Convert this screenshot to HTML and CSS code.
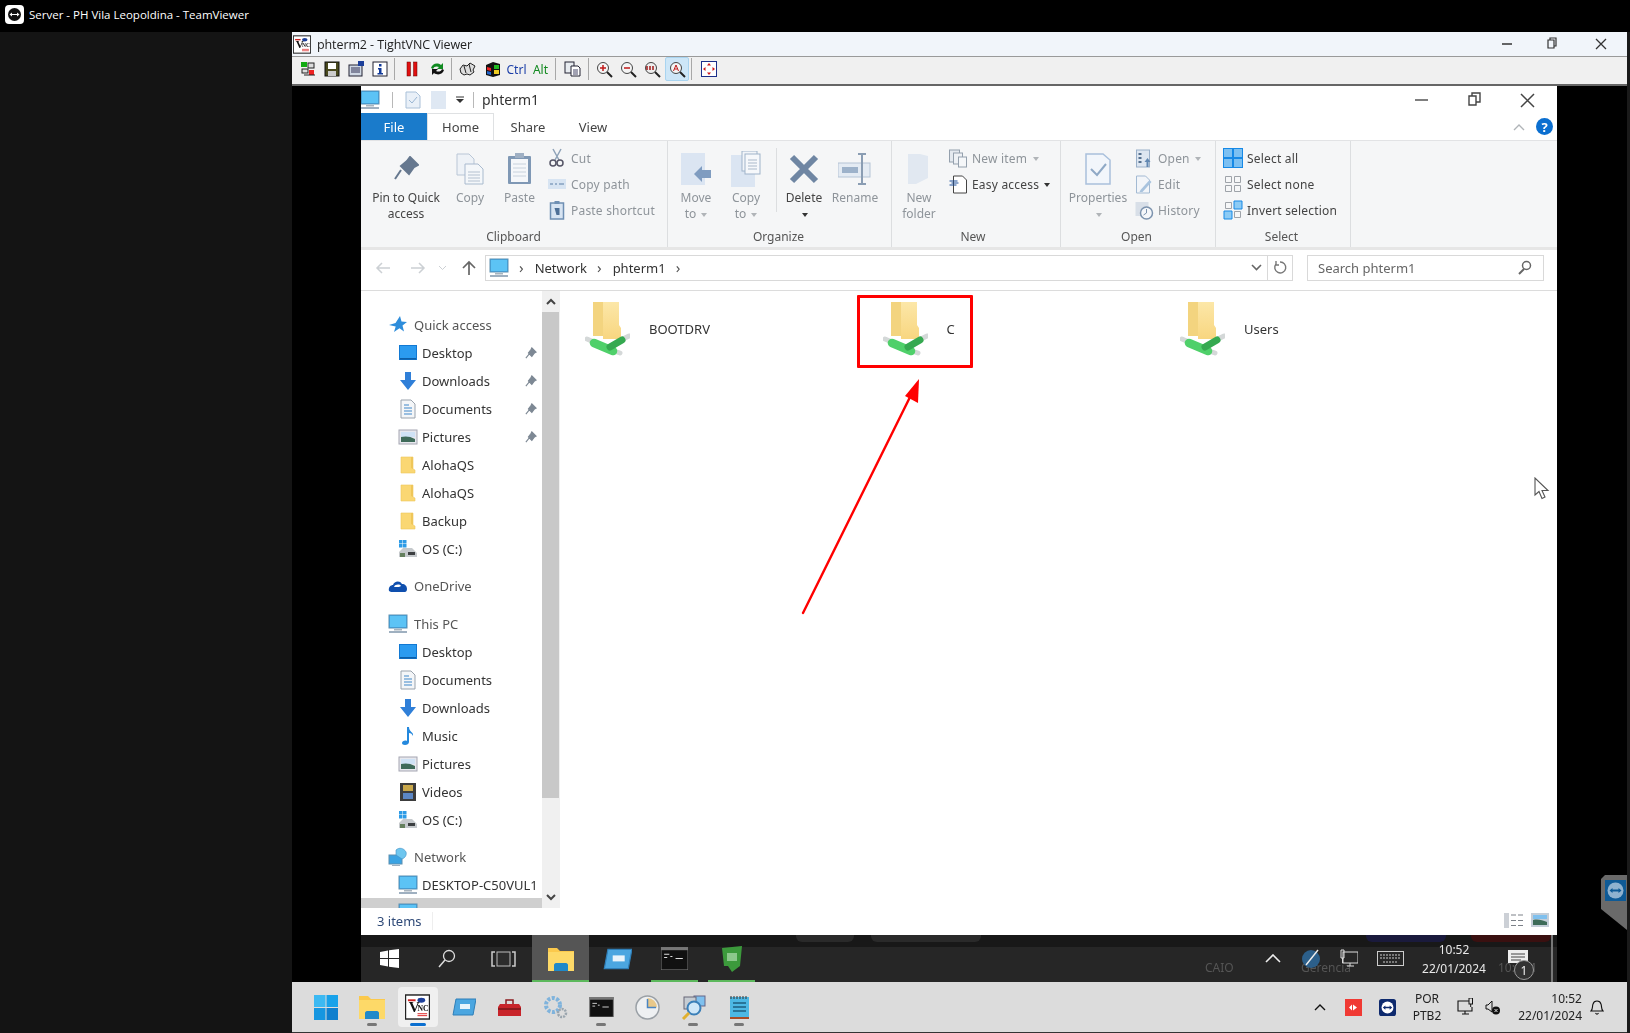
FILE: index.html
```html
<!DOCTYPE html>
<html lang="en">
<head>
<meta charset="utf-8">
<title>Server - PH Vila Leopoldina - TeamViewer</title>
<link rel="stylesheet" href="styles.css">
</head>
<body>
<svg class="defs" width="0" height="0">
  <defs>
    <linearGradient id="fgrad" x1="0" y1="0" x2="0" y2="1"><stop offset="0" stop-color="#fce7a8"/><stop offset="1" stop-color="#f8d680"/></linearGradient>
    <symbol id="mon" viewBox="0 0 20 20"><rect x="1" y="1" width="18" height="13" fill="#35a8ee" stroke="#5d8fb0"/><rect x="2" y="2" width="16" height="11" fill="#5cc3f5"/><rect x="6" y="15" width="8" height="1.5" fill="#a8b4be"/><rect x="1" y="17" width="18" height="2" fill="#9fb0c0"/></symbol>
    <symbol id="desk" viewBox="0 0 20 20"><rect x="1" y="2" width="18" height="15" fill="#1279d3"/><rect x="2" y="3" width="16" height="12" fill="#2b9bf0"/><rect x="2" y="15" width="16" height="1.5" fill="#0d5fa8"/></symbol>
    <symbol id="down" viewBox="0 0 20 20"><path d="M7 1h6v8h5l-8 10L2 9h5z" fill="#2f7fd8"/></symbol>
    <symbol id="doc" viewBox="0 0 20 20"><path d="M3 1h10l4 4v14H3z" fill="#f4f6f8" stroke="#9aa3ad"/><path d="M6 6h5M6 9h8M6 12h8M6 15h8" stroke="#3f87c9"/></symbol>
    <symbol id="pic" viewBox="0 0 20 20"><rect x="1" y="3" width="18" height="14" fill="#e7e8ee" stroke="#a5a6b2"/><rect x="3" y="5" width="14" height="5" fill="#cfe2f5"/><path d="M3 10c4-1 9-1 14 2v3H3z" fill="#3f6b5a"/></symbol>
    <symbol id="fold" viewBox="0 0 20 20"><path d="M3 2h12v12l2 1v3H3z" fill="#fad773" stroke="#eec65c" stroke-width=".6"/><path d="M13 2h2v12l-2-1z" fill="#efc659"/></symbol>
    <symbol id="drive" viewBox="0 0 20 20"><rect x="1" y="1" width="3.5" height="3.5" fill="#2d9be6"/><rect x="5" y="1" width="3.5" height="3.5" fill="#2d9be6"/><rect x="1" y="5" width="3.5" height="3.5" fill="#2d9be6"/><rect x="5" y="5" width="3.5" height="3.5" fill="#2d9be6"/><path d="M1 13l4-4h9l5 5v4H1z" fill="#c5c9cc"/><rect x="10" y="13" width="7" height="3" fill="#3c3f41"/><rect x="2" y="14" width="5" height="4" fill="#65805e"/></symbol>
    <symbol id="pin" viewBox="0 0 14 14"><path d="M8 1l5 5-2 1-3 4-1-1-2-2-1-1 3-4zM5 8l-4 5" fill="#7d8894" stroke="#7d8894" stroke-width="1.3"/></symbol>
    <symbol id="star" viewBox="0 0 20 20"><path d="M12 1l1.5 5.5L19 7l-4.500 3.500 1.500 6-4.500-3.300L6 17l1.700-5.600L1 10l6.500-2z" fill="#2e8ddb"/></symbol>
    <symbol id="cloud" viewBox="0 0 20 20"><path d="M1 15c-1-4 2-6 4-6 1-4 7-5 9-1 3 0 5 2 5 5 0 2-1 3-2 3H3z" fill="#0f4fae"/><path d="M6 11c1-3 6-3 7-1l-2 1c-2 0-3 0-5 0z" fill="#fff"/></symbol>
    <symbol id="net" viewBox="0 0 20 20"><rect x="1" y="8" width="13" height="9" fill="#3aa3e3" stroke="#5d8fb0"/><rect x="4" y="18" width="8" height="1" fill="#9fb0c0"/><path d="M8 3c3-3 8-2 10 2 1 3-1 6-4 7L8 8z" fill="#6ec6ef" stroke="#3f8fc5" stroke-width=".6"/></symbol>
    <symbol id="music" viewBox="0 0 20 20"><path d="M9 1h2c0 5 5 5 4 9-1-2-2-3-4-3v9c0 2-2 3-4 3s-3-1-3-2c0-2 3-3 5-2z" fill="#2488dd"/></symbol>
    <symbol id="vid" viewBox="0 0 20 20"><rect x="2" y="1" width="16" height="18" fill="#3c3c3c"/><rect x="5" y="3" width="10" height="6" fill="#c9a84b"/><rect x="5" y="11" width="10" height="6" fill="#5b86c4"/></symbol>
    <symbol id="nf" viewBox="0 0 45 55"><path d="M8 1h16v34H8z" fill="#f3d47f"/><path d="M18 1h16v23l2 3v11H18z" fill="url(#fgrad)"/><path d="M2 38l7 3M29 50l6 2M38 38l6-3" stroke="#d4d8d8" stroke-width="5" stroke-linecap="round"/><path d="M9 42l19 8" stroke="#4fd06a" stroke-width="8.500" stroke-linecap="round"/><path d="M25 46l12-7" stroke="#35a950" stroke-width="7" stroke-linecap="round"/></symbol>
    <symbol id="vnc" viewBox="0 0 26 26"><rect x=".5" y=".5" width="25" height="25" fill="#fff" stroke="#222" stroke-width="1.500"/><ellipse cx="17" cy="6" rx="4" ry="2.500" fill="#1c3f9a"/><path d="M3 6h8" stroke="#c22" stroke-width="2"/><text x="4" y="18" class="vnct">V</text><text x="13" y="17" class="vncs">NC</text><path d="M13 20h10" stroke="#d22"/><path d="M13 22h10" stroke="#d22"/></symbol>
    <symbol id="tv" viewBox="0 0 20 20"><rect width="20" height="20" rx="3" fill="#0e2a6e"/><circle cx="10" cy="10" r="7" fill="#fff"/><path d="M4.500 10L7.500 7.500V9h5V7.500l3 2.500-3 2.500V11h-5v1.500z" fill="#0e2a6e"/></symbol>
    <symbol id="term" viewBox="0 0 26 22"><rect width="26" height="22" fill="#111" stroke="#777"/><rect y="0" width="26" height="3" fill="#777"/><path d="M3 7h5M3 10h3M9 9h2M14 11h7" stroke="#ddd"/></symbol>
    <symbol id="efold" viewBox="0 0 26 24"><path d="M0 1h9l3 3h14v20H0z" fill="#fbc94c"/><rect y="5" width="26" height="19" fill="#fdd968"/><path d="M6 24v-6c0-1 1-2 2-2h10c1 0 2 1 2 2v6z" fill="#1f89c9"/></symbol>
    <symbol id="blue" viewBox="0 0 24 20"><path d="M4 2h20l-3 16H1z" fill="#4ba6e0" stroke="#2f7fb8"/><rect x="8" y="7" width="10" height="5" fill="#e9f4fb"/></symbol>
  </defs>
</svg>

<div class="screen">
  <header class="topbar">
    <svg class="tvlogo" width="19" height="19" viewBox="0 0 19 19"><rect width="19" height="19" rx="4" fill="#fff"/><circle cx="9.500" cy="9.500" r="6.500" fill="#111"/><path d="M4.500 9.500L7 7.500V9h5V7.500l2.500 2-2.500 2V10H7v1.500z" fill="#fff"/></svg>
    <span class="toptitle">Server - PH Vila Leopoldina - TeamViewer</span>
  </header>

  <div class="stage">
    <aside class="leftpad"></aside>
    <main class="vnc">
      <div class="vnctitle">
        <svg class="vncico" width="18" height="19"><use href="#vnc"/></svg>
        <span class="vnctext">phterm2 - TightVNC Viewer</span>
        <div class="wbtns vncbtns">
          <svg width="46" height="14" viewBox="0 0 46 14"><path d="M16 7h10" stroke="#333" stroke-width="1.500"/></svg>
          <svg width="46" height="14" viewBox="0 0 46 14"><path d="M16 3h6v8h-6zM18 3V1h6v8h-2" fill="none" stroke="#333" stroke-width="1.200"/></svg>
          <svg width="46" height="14" viewBox="0 0 46 14"><path d="M18 2l10 10M28 2L18 12" stroke="#333" stroke-width="1.300"/></svg>
        </div>
      </div>

      <div class="toolbar">
        <span class="tb w24"><svg width="16" height="16" viewBox="0 0 16 16"><rect x="1" y="1" width="6" height="5" fill="#1a1"/><rect x="8" y="2" width="6" height="5" fill="#ddd" stroke="#222"/><rect x="2" y="8" width="6" height="4" fill="#ddd" stroke="#222"/><rect x="9" y="9" width="5" height="5" fill="#e22"/><path d="M4 14h11" stroke="#222"/></svg></span>
        <span class="tb w24"><svg width="16" height="16" viewBox="0 0 16 16"><rect x="1" y="1" width="14" height="14" fill="#4a4a1e" stroke="#111"/><rect x="4" y="2" width="8" height="6" fill="#fff"/><rect x="4" y="10" width="8" height="5" fill="#ccc"/></svg></span>
        <span class="tb w24"><svg width="16" height="16" viewBox="0 0 16 16"><rect x="1" y="4" width="13" height="11" fill="#cfd8e4" stroke="#223"/><path d="M3 7h9M3 9h9M3 11h9" stroke="#335"/><rect x="10" y="0" width="6" height="5" fill="#1c3f9a"/></svg></span>
        <span class="tb w24"><svg width="16" height="16" viewBox="0 0 16 16"><rect x="1" y="1" width="14" height="14" fill="#fff" stroke="#223"/><rect x="7" y="3" width="2.500" height="2.500" fill="#123a9a"/><path d="M6 7h3.500v5H11v1.500H5.500V12H7V8.500H6z" fill="#123a9a"/></svg></span>
        <span class="tbsep w7"></span>
        <span class="tb w26"><svg width="12" height="16" viewBox="0 0 12 16"><rect x="1" y="1" width="3.500" height="14" fill="#e01010" stroke="#600" stroke-width=".5"/><rect x="7.500" y="1" width="3.500" height="14" fill="#e01010" stroke="#600" stroke-width=".5"/></svg></span>
        <span class="tb w24"><svg width="17" height="16" viewBox="0 0 17 16"><path d="M2 7c1-4 6-6 10-3l2-2v6H8l2-2C8 5 5 5 4 8z" fill="#108a20"/><path d="M15 9c-1 4-6 6-10 3l-2 2V8h6l-2 2c2 1 5 1 6-2z" fill="#111"/></svg></span>
        <span class="tbsep w6"></span>
        <span class="tb w25"><svg width="17" height="14" viewBox="0 0 17 14"><path d="M1 7l3-4 4 1 3-3 5 3-2 4 1 2-4 3-3-1-3 1-3-2z" fill="#ddd" stroke="#222"/><path d="M5 4l2 7M10 2l2 8" stroke="#222"/></svg></span>
        <span class="tb w25"><svg width="16" height="17" viewBox="0 0 16 17"><path d="M1 4l7-3 7 2v11l-7 2-7-2z" fill="#111"/><path d="M2 6l4 1v3L2 9z" fill="#e22"/><path d="M9 4l5 0v4H9z" fill="#2b2"/><path d="M2 10l4 1v3l-4-1z" fill="#26c"/><path d="M9 9h5v4H9z" fill="#ec2"/></svg></span>
        <span class="tb w23 ctrl">Ctrl</span>
        <span class="tb w25 alt">Alt</span>
        <span class="tbsep w6"></span>
        <span class="tb w27"><svg width="17" height="16" viewBox="0 0 17 16"><rect x="1" y="1" width="9" height="11" fill="#e8ecf0" stroke="#223"/><path d="M7 5h7l2 2v8H7z" fill="#fff" stroke="#223"/><path d="M9 9h5M9 11h5M9 13h5" stroke="#446"/></svg></span>
        <span class="tbsep w6"></span>
        <span class="tb w24"><svg width="17" height="17" viewBox="0 0 17 17"><circle cx="7" cy="7" r="5.500" fill="#f4f4f4" stroke="#444"/><path d="M4 7h6M7 4v6" stroke="#c01818" stroke-width="1.500"/><path d="M11 11l5 5" stroke="#222" stroke-width="2"/></svg></span>
        <span class="tb w24"><svg width="17" height="17" viewBox="0 0 17 17"><circle cx="7" cy="7" r="5.500" fill="#f4f4f4" stroke="#444"/><path d="M4 7h6" stroke="#c01818" stroke-width="1.500"/><path d="M11 11l5 5" stroke="#222" stroke-width="2"/></svg></span>
        <span class="tb w25"><svg width="17" height="17" viewBox="0 0 17 17"><circle cx="7" cy="7" r="5.500" fill="#eee" stroke="#444"/><path d="M3 5v4M6 5v4M9 5v4" stroke="#a01818" stroke-width="1.500"/><path d="M11 11l5 5" stroke="#222" stroke-width="2"/></svg></span>
        <span class="tb w24 tbon"><svg width="17" height="17" viewBox="0 0 17 17"><circle cx="7" cy="7" r="5.500" fill="#f4f4f4" stroke="#444"/><path d="M4.500 10L7 4l2.500 6M5.500 8h3" fill="none" stroke="#c01818"/><path d="M11 11l5 5" stroke="#222" stroke-width="2"/></svg></span>
        <span class="tbsep w7"></span>
        <span class="tb w26"><svg width="16" height="16" viewBox="0 0 16 16"><rect x=".5" y=".5" width="15" height="15" fill="#fff" stroke="#1c2f8a"/><path d="M8 2l2 2.500H6zM8 14l2-2.500H6zM2 8l2.500-2v4zM14 8l-2.500-2v4z" fill="#d01818"/></svg></span>
      </div>

      <div class="viewport">
        <section class="explorer">
          <div class="extitle">
            <svg class="qa-mon" width="20" height="20"><use href="#mon"/></svg>
            <span class="qasep"></span>
            <svg width="16" height="18" viewBox="0 0 16 18"><path d="M1 1h10l4 4v12H1z" fill="#e9f0f8" stroke="#a9c0d8"/><path d="M4 9l3 3 5-6" fill="none" stroke="#9ab6d3"/></svg>
            <svg class="qa-blank" width="15" height="18" viewBox="0 0 15 18"><rect width="15" height="18" fill="#dfe8f3"/></svg>
            <svg class="qa-drop" width="8" height="8" viewBox="0 0 8 8"><path d="M0 1h8" stroke="#333"/><path d="M0 3h8L4 7z" fill="#333"/></svg>
            <span class="qasep qasep2"></span>
            <span class="extext">phterm1</span>
            <div class="wbtns exbtns">
              <svg width="53" height="16" viewBox="0 0 53 16"><path d="M20 8h13" stroke="#555" stroke-width="1.500"/></svg>
              <svg width="53" height="16" viewBox="0 0 53 16"><path d="M21 4h7v9h-7zM24 4V1h8v9h-4" fill="none" stroke="#444" stroke-width="1.400"/></svg>
              <svg width="53" height="16" viewBox="0 0 53 16"><path d="M20 2l13 13M33 2L20 15" stroke="#444" stroke-width="1.500"/></svg>
            </div>
          </div>

          <nav class="tabs">
            <span class="tab file">File</span>
            <span class="tab home">Home</span>
            <span class="tab w68">Share</span>
            <span class="tab w62">View</span>
            <div class="tabright">
              <svg width="12" height="8" viewBox="0 0 12 8"><path d="M1 7l5-5 5 5" fill="none" stroke="#b0b4b8" stroke-width="1.400"/></svg>
              <span class="help">?</span>
            </div>
          </nav>

          <div class="ribbon">
            <div class="group g1">
              <div class="gbody">
                <div class="big w72"><div class="bigico"><svg width="26" height="26" viewBox="0 0 26 26"><path d="M17 1l8 8-4 2-5 7-2-2-4-4-2-2 6-5zM8 14l-6 9" fill="#66788f" stroke="#66788f" stroke-width="2"/></svg></div><span>Pin to Quick</span><span>access</span></div>
                <div class="big w56 off"><div class="bigico"><svg width="28" height="32" viewBox="0 0 28 32"><path d="M1 1h12l5 5v16H1z" fill="#eef2f7" stroke="#b9c6d6"/><path d="M9 11h13l5 5v15H9z" fill="#f4f7fa" stroke="#a9bace"/><path d="M12 19h12M12 22h12M12 25h12M12 28h12" stroke="#b4c1d0"/></svg></div><span>Copy</span></div>
                <div class="big w43 off"><div class="bigico"><svg width="25" height="32" viewBox="0 0 25 32"><rect x="1" y="3" width="23" height="28" rx="1" fill="#7f98b5"/><rect x="4" y="6" width="17" height="23" fill="#f5f7fa"/><path d="M6 11h13M6 15h13M6 19h13M6 23h13" stroke="#c8d2dd"/><rect x="8" y="0" width="9" height="5" fill="#9fb0c4"/></svg></div><span>Paste</span></div>
                <div class="smalls">
                  <div class="sm off"><svg width="16" height="20" viewBox="0 0 16 20"><path d="M4 1l6 11M12 1L6 12" stroke="#8fa3b8" stroke-width="1.500"/><circle cx="4" cy="15" r="3" fill="none" stroke="#556" stroke-width="1.500"/><circle cx="11" cy="15" r="3" fill="none" stroke="#556" stroke-width="1.500"/></svg><span>Cut</span></div>
                  <div class="sm off"><svg width="18" height="10" viewBox="0 0 18 10"><rect width="18" height="10" fill="#d7e4f2"/><path d="M2 5h3M7 5h2M11 5h5" stroke="#5a7fa6"/></svg><span>Copy path</span></div>
                  <div class="sm off"><svg width="15" height="19" viewBox="0 0 15 19"><rect x="1" y="2" width="13" height="16" fill="#d7e4f2" stroke="#6e8fb3" stroke-width="1.500"/><rect x="5" y="0" width="5" height="3" fill="#6e8fb3"/><path d="M5 7h5v7H7z" fill="#4d6f96"/></svg><span>Paste shortcut</span></div>
                </div>
              </div>
              <div class="glabel">Clipboard</div>
            </div>
            <div class="group g2">
              <div class="gbody">
                <div class="big w40 off"><div class="bigico"><svg width="30" height="32" viewBox="0 0 30 32"><rect x="0" y="0" width="24" height="32" fill="#dbe5f2"/><path d="M13 21l8-8v4h9v8h-9v4z" fill="#7f9cc0"/></svg></div><span>Move</span><span>to <i class="caret"></i></span></div>
                <div class="big w60 off"><div class="bigico"><svg width="30" height="36" viewBox="0 0 30 36"><rect x="0" y="4" width="24" height="32" fill="#dbe5f2"/><rect x="11" y="0" width="15" height="20" fill="#f2f5f9" stroke="#9fb3ca"/><rect x="14" y="3" width="15" height="20" fill="#f6f8fb" stroke="#9fb3ca"/><path d="M17 9h9M17 12h9M17 15h9M17 18h9" stroke="#aab9ca"/></svg></div><span>Copy</span><span>to <i class="caret"></i></span></div>
                <span class="vline"></span>
                <div class="big w52"><div class="bigico"><svg width="30" height="30" viewBox="0 0 30 30"><path d="M3 3l24 24M27 3L3 27" stroke="#6f86a3" stroke-width="6"/></svg></div><span>Delete</span><span><i class="caret dark"></i></span></div>
                <div class="big w50 off"><div class="bigico"><svg width="34" height="32" viewBox="0 0 34 32"><rect x="0" y="10" width="32" height="14" fill="#e4ebf3" stroke="#b5c4d6"/><rect x="4" y="14" width="16" height="6" fill="#9db2ca"/><path d="M20 1h8M24 1v30M20 31h8" stroke="#8a9db3" stroke-width="2"/></svg></div><span>Rename</span></div>
              </div>
              <div class="glabel">Organize</div>
            </div>
            <div class="group g3">
              <div class="gbody">
                <div class="big w46 off"><div class="bigico"><svg width="22" height="32" viewBox="0 0 22 32"><path d="M0 1h12l8 2v22l-12 6H0z" fill="#e1e8f1"/></svg></div><span>New</span><span>folder</span></div>
                <div class="smalls">
                  <div class="sm off"><svg width="19" height="19" viewBox="0 0 19 19"><rect x="1" y="1" width="10" height="12" fill="#e4e9ef" stroke="#94a0ad"/><rect x="5" y="4" width="9" height="11" fill="#eef1f5" stroke="#94a0ad"/><rect x="10" y="8" width="8" height="10" fill="#f5f7f9" stroke="#94a0ad"/></svg><span>New item <i class="caret"></i></span></div>
                  <div class="sm"><svg width="19" height="19" viewBox="0 0 19 19"><path d="M5 1h9l4 4v13H5z" fill="#fff" stroke="#444"/><path d="M1 6h8M3 8h7M1 10h7" stroke="#1c4f9a"/></svg><span>Easy access <i class="caret dark"></i></span></div>
                </div>
              </div>
              <div class="glabel">New</div>
            </div>
            <div class="group g4">
              <div class="gbody">
                <div class="big w60 off"><div class="bigico"><svg width="26" height="32" viewBox="0 0 26 32"><path d="M1 1h17l7 6v24H1z" fill="#f2f6fb" stroke="#a9c0dc" stroke-width="1.500"/><path d="M6 16l6 6 9-11" fill="none" stroke="#8fa9c6" stroke-width="2"/></svg></div><span>Properties</span><span><i class="caret"></i></span></div>
                <div class="smalls">
                  <div class="sm off"><svg width="17" height="19" viewBox="0 0 17 19"><rect x="1" y="1" width="13" height="17" fill="#dde6f1" stroke="#9ab0c9"/><path d="M3 5h3M3 9h3M3 13h3" stroke="#55708f" stroke-width="2"/><path d="M11 18v-5h-2l3-4 3 4h-2v5z" fill="#6288b2"/></svg><span>Open <i class="caret"></i></span></div>
                  <div class="sm off"><svg width="17" height="19" viewBox="0 0 17 19"><path d="M1 1h9l4 4v13H1z" fill="#f2f5f9" stroke="#a3bad3"/><path d="M5 15l9-10 2 2-9 10H4z" fill="#a8c3de"/></svg><span>Edit</span></div>
                  <div class="sm off"><svg width="19" height="19" viewBox="0 0 19 19"><rect x="1" y="1" width="13" height="14" fill="#d8dfe8"/><circle cx="12" cy="12" r="6" fill="#f5f7fa" stroke="#7c93ae" stroke-width="1.500"/><path d="M12 8v4l-3 2" fill="none" stroke="#7c93ae"/></svg><span>History</span></div>
                </div>
              </div>
              <div class="glabel">Open</div>
            </div>
            <div class="group g5">
              <div class="smalls s5">
                <div class="sm"><svg width="20" height="20" viewBox="0 0 20 20"><rect x=".5" y=".5" width="19" height="19" fill="#7cc0f2" stroke="#1689e6"/><path d="M10 0v20M0 10h20" stroke="#1689e6" stroke-width="2"/></svg><span>Select all</span></div>
                <div class="sm"><svg width="20" height="20" viewBox="0 0 20 20"><path d="M2.500 2.500h6v6h-6zM11.500 2.500h6v6h-6zM2.500 11.500h6v6h-6zM11.500 11.500h6v6h-6z" fill="#f6f7f8" stroke="#9ea3a9"/></svg><span>Select none</span></div>
                <div class="sm"><svg width="20" height="20" viewBox="0 0 20 20"><path d="M2.500 2.500h6v6h-6zM11.500 11.500h6v6h-6z" fill="#f6f7f8" stroke="#9ea3a9"/><path d="M11 1h8v8h-8zM1 11h8v8H1z" fill="#8ccbf5" stroke="#1689e6"/></svg><span>Invert selection</span></div>
              </div>
              <div class="glabel">Select</div>
            </div>
          </div>

          <div class="addrrow">
            <svg class="navic" width="16" height="12" viewBox="0 0 16 12"><path d="M15 6H2M7 1L2 6l5 5" fill="none" stroke="#ccd0d4" stroke-width="1.500"/></svg>
            <svg class="navic nv2" width="16" height="12" viewBox="0 0 16 12"><path d="M1 6h13M9 1l5 5-5 5" fill="none" stroke="#ccd0d4" stroke-width="1.500"/></svg>
            <svg class="navic nv3" width="9" height="6" viewBox="0 0 9 6"><path d="M1 1l3.500 3.500L8 1" fill="none" stroke="#ccd0d4"/></svg>
            <svg class="navic nv4" width="14" height="15" viewBox="0 0 14 15"><path d="M7 15V2M1 8l6-6 6 6" fill="none" stroke="#666" stroke-width="1.700"/></svg>
            <div class="addr">
              <svg width="20" height="20"><use href="#mon"/></svg>
              <span class="chev">›</span><span>Network</span><span class="chev">›</span><span>phterm1</span><span class="chev">›</span>
              <div class="addrend">
                <svg width="11" height="7" viewBox="0 0 11 7"><path d="M1 1l4.500 4.500L10 1" fill="none" stroke="#666" stroke-width="1.600"/></svg>
                <span class="addrrefresh"><svg width="14" height="15" viewBox="0 0 14 15"><path d="M7 2a5.500 5.500 0 1 1-4 2M3 1v4h3" fill="none" stroke="#777" stroke-width="1.400"/></svg></span>
              </div>
            </div>
            <div class="search">
              <span>Search phterm1</span>
              <svg width="14" height="15" viewBox="0 0 14 15"><circle cx="8.500" cy="5.500" r="4" fill="none" stroke="#666" stroke-width="1.500"/><path d="M6 9l-5 5" stroke="#666" stroke-width="2"/></svg>
            </div>
          </div>

          <div class="mainarea">
            <div class="tree">
              <div class="row top"><svg width="20" height="20"><use href="#star"/></svg><span>Quick access</span></div>
              <div class="row"><svg width="20" height="20"><use href="#desk"/></svg><span>Desktop</span><svg class="pinned" width="12" height="12"><use href="#pin"/></svg></div>
              <div class="row"><svg width="20" height="20"><use href="#down"/></svg><span>Downloads</span><svg class="pinned" width="12" height="12"><use href="#pin"/></svg></div>
              <div class="row"><svg width="20" height="20"><use href="#doc"/></svg><span>Documents</span><svg class="pinned" width="12" height="12"><use href="#pin"/></svg></div>
              <div class="row"><svg width="20" height="20"><use href="#pic"/></svg><span>Pictures</span><svg class="pinned" width="12" height="12"><use href="#pin"/></svg></div>
              <div class="row"><svg width="20" height="20"><use href="#fold"/></svg><span>AlohaQS</span></div>
              <div class="row"><svg width="20" height="20"><use href="#fold"/></svg><span>AlohaQS</span></div>
              <div class="row"><svg width="20" height="20"><use href="#fold"/></svg><span>Backup</span></div>
              <div class="row"><svg width="20" height="20"><use href="#drive"/></svg><span>OS (C:)</span></div>
              <div class="row top gap"><svg width="20" height="20"><use href="#cloud"/></svg><span>OneDrive</span></div>
              <div class="row top gap3"><svg width="20" height="20"><use href="#mon"/></svg><span>This PC</span></div>
              <div class="row"><svg width="20" height="20"><use href="#desk"/></svg><span>Desktop</span></div>
              <div class="row"><svg width="20" height="20"><use href="#doc"/></svg><span>Documents</span></div>
              <div class="row"><svg width="20" height="20"><use href="#down"/></svg><span>Downloads</span></div>
              <div class="row"><svg width="20" height="20"><use href="#music"/></svg><span>Music</span></div>
              <div class="row"><svg width="20" height="20"><use href="#pic"/></svg><span>Pictures</span></div>
              <div class="row"><svg width="20" height="20"><use href="#vid"/></svg><span>Videos</span></div>
              <div class="row"><svg width="20" height="20"><use href="#drive"/></svg><span>OS (C:)</span></div>
              <div class="row top gap"><svg width="20" height="20"><use href="#net"/></svg><span>Network</span></div>
              <div class="row"><svg width="20" height="20"><use href="#mon"/></svg><span>DESKTOP-C50VUL1</span></div>
              <div class="row hbar"><svg width="20" height="20"><use href="#mon"/></svg><span>PHTERM1</span></div>
            </div>
            <div class="vscroll">
              <svg width="18" height="21" viewBox="0 0 18 21"><path d="M5 13l4-4 4 4" fill="none" stroke="#444" stroke-width="2"/></svg>
              <div class="thumb"></div>
              <svg class="sdown" width="18" height="20" viewBox="0 0 18 20"><path d="M5 7l4 4 4-4" fill="none" stroke="#444" stroke-width="2"/></svg>
            </div>
            <div class="files">
              <div class="fileitem"><svg width="45" height="55"><use href="#nf"/></svg><span>BOOTDRV</span></div>
              <div class="fileitem"><svg width="45" height="55"><use href="#nf"/></svg><span>C</span></div>
              <div class="fileitem"><svg width="45" height="55"><use href="#nf"/></svg><span>Users</span></div>
            </div>
          </div>

          <footer class="status">
            <span class="items">3 items</span>
            <div class="viewbtns">
              <svg width="20" height="15" viewBox="0 0 20 15"><rect x="0" y="0" width="5" height="15" fill="#ccd0d6"/><path d="M7 2h5M14 2h5M7 7.500h5M14 7.500h5M7 12.500h5M14 12.500h5" stroke="#7c8188"/></svg>
              <svg width="18" height="14" viewBox="0 0 18 14"><rect width="18" height="14" fill="#c4ced8"/><rect x="2" y="2" width="14" height="4" fill="#7fc0ee"/><path d="M2 7c5-1 9 0 14 2v3H2z" fill="#3d6b58"/></svg>
            </div>
          </footer>

          <div class="remotebar">
            <div class="ghosts"><i class="gh gh1"></i><i class="gh gh2"></i><i class="gh gh3"></i><i class="gh gh4"></i></div>
            <span class="ghtext gt1">CAIO</span><span class="ghtext gt2">Gerencia</span><span class="ghtext gt3">10:5 M</span>
            <span class="rb"><svg width="19" height="19" viewBox="0 0 19 19"><path d="M0 3l8-1.500V9H0zM9 1.300L19 0v9H9zM0 10h8v7.500L0 16zM9 10h10v9L9 17.700z" fill="#fff"/></svg></span>
            <span class="rb"><svg width="19" height="19" viewBox="0 0 19 19"><circle cx="12" cy="7" r="5.500" fill="none" stroke="#ddd" stroke-width="1.300"/><path d="M8 11l-6 7" stroke="#ddd" stroke-width="1.500"/></svg></span>
            <span class="rb"><svg width="25" height="16" viewBox="0 0 25 16"><path d="M4 1H1v14h3M21 1h3v14h-3" fill="none" stroke="#ccc" stroke-width="1.500"/><rect x="6" y="1" width="13" height="14" fill="#2c2c2c" stroke="#bbb"/></svg></span>
            <span class="rb rbon"><svg width="26" height="24"><use href="#efold"/></svg></span>
            <span class="rb"><svg width="29" height="24"><use href="#blue"/></svg></span>
            <span class="rb rbrun"><svg width="27" height="23"><use href="#term"/></svg></span>
            <span class="rb rbrun"><svg width="24" height="26" viewBox="0 0 24 26"><path d="M2 2l20-2-2 20-8 6-4-6H4z" fill="#3c9a3c"/><path d="M7 7h10v8H7z" fill="#8cc88c"/></svg></span>
            <div class="rtray">
              <span class="c w38"><svg width="16" height="9" viewBox="0 0 16 9"><path d="M1 8l7-7 7 7" fill="none" stroke="#eee" stroke-width="1.600"/></svg></span>
              <span class="c w37"><svg width="20" height="22" viewBox="0 0 20 22"><circle cx="10" cy="11" r="9" fill="#2c5f8a"/><path d="M5 17L17 2" stroke="#eee" stroke-width="1.400"/></svg></span>
              <span class="c w38"><svg width="20" height="20" viewBox="0 0 20 20"><rect x="5" y="3" width="15" height="11" fill="none" stroke="#ddd"/><path d="M9 17h7M12 14v3M3 1h3v8H3zM4.500 9v5" fill="none" stroke="#ddd"/></svg></span>
              <span class="c w46"><svg width="27" height="15" viewBox="0 0 27 15"><rect x=".5" y=".5" width="26" height="14" fill="none" stroke="#ccc"/><path d="M3 4h21M3 7h21M6 11h15" stroke="#ccc" stroke-dasharray="2 1"/></svg></span>
              <span class="c w82 rclock"><span>10:52</span><span>22/01/2024</span></span>
              <span class="c w46 rnote"><svg width="20" height="17" viewBox="0 0 20 17"><path d="M0 0h20v13h-5v4l-4-4H0z" fill="#eee"/><path d="M3 4h14M3 7h14M3 10h10" stroke="#444"/></svg><span class="badge1">1</span></span>
            </div>
            <span class="rline"></span>
          </div>
        </section>
      </div>

      <div class="winbar">
        <span class="ob"><svg width="24" height="25" viewBox="0 0 24 25"><rect width="11.500" height="12" fill="#3cb9f2"/><rect x="12.500" width="11.500" height="12" fill="#18a2ea"/><rect y="13" width="11.500" height="12" fill="#1696e0"/><rect x="12.500" y="13" width="11.500" height="12" fill="#0f7fce"/></svg></span>
        <span class="ob run"><svg width="26" height="24"><use href="#efold"/></svg></span>
        <span class="ob active"><svg width="25" height="26"><use href="#vnc"/></svg></span>
        <span class="ob"><svg width="24" height="20"><use href="#blue"/></svg></span>
        <span class="ob"><svg width="23" height="17" viewBox="0 0 23 17"><path d="M2 5h19l2 3v9H0V8z" fill="#c8242a"/><path d="M8 5V1h7v4" fill="none" stroke="#8c1a1e" stroke-width="1.500"/><rect x="0" y="9" width="23" height="2" fill="#8c1a1e"/></svg></span>
        <span class="ob"><svg width="25" height="24" viewBox="0 0 25 24"><circle cx="10" cy="10" r="7" fill="none" stroke="#7fb3dc" stroke-width="4" stroke-dasharray="3 1.500"/><circle cx="19" cy="18" r="4" fill="none" stroke="#9aa5ae" stroke-width="2.500" stroke-dasharray="2 1"/></svg></span>
        <span class="ob run"><svg width="25" height="20"><use href="#term"/></svg></span>
        <span class="ob"><svg width="25" height="25" viewBox="0 0 25 25"><circle cx="12.500" cy="12.500" r="11.500" fill="#eef0f2" stroke="#9aa0a6" stroke-width="1.500"/><path d="M12.500 3a9.500 9.500 0 0 1 9.500 9.500h-9.500z" fill="#e8c88a"/><path d="M12.500 4v8.500H21" fill="none" stroke="#4a85c2" stroke-width="1.500"/></svg></span>
        <span class="ob run"><svg width="25" height="25" viewBox="0 0 25 25"><rect x="13" y="1" width="11" height="10" fill="#7fc0ee" stroke="#668"/><rect x="3" y="2" width="12" height="12" fill="#c6ccd2" stroke="#667"/><circle cx="13" cy="13" r="6.500" fill="#cfe7f8" stroke="#3a7fb8" stroke-width="2"/><path d="M8 18l-6 6" stroke="#e0b030" stroke-width="3"/></svg></span>
        <span class="ob run"><svg width="19" height="25" viewBox="0 0 19 25"><rect x="0" y="2" width="19" height="21" fill="#4cb8e4"/><path d="M1 1v3M4 1v3M7 1v3M10 1v3M13 1v3M16 1v3" stroke="#333"/><path d="M3 8h13M3 12h13M3 16h13" stroke="#1c5f80" stroke-width="1.600"/><rect x="0" y="22" width="19" height="2" fill="#a84d28"/></svg></span>
        <div class="otray">
          <span class="c w34"><svg width="12" height="7" viewBox="0 0 12 7"><path d="M1 6l5-5 5 5" fill="none" stroke="#111" stroke-width="1.400"/></svg></span>
          <span class="c w33"><svg width="17" height="17" viewBox="0 0 17 17"><rect width="17" height="17" fill="#f03a34"/><path d="M4 8.500l3-3v6zM8 5.500l4 3-4 3z" fill="#fff"/></svg></span>
          <span class="c w35"><svg width="17" height="17"><use href="#tv"/></svg></span>
          <span class="c w44 lang"><span>POR</span><span>PTB2</span></span>
          <span class="c w33"><svg width="17" height="18" viewBox="0 0 17 18"><path d="M12 3H1v10h14V9M5 16h7M8 13v3" fill="none" stroke="#111" stroke-width="1.100"/><rect x="12" y="0" width="3.500" height="6" fill="none" stroke="#111"/><path d="M13.700 6v3" stroke="#111"/></svg></span>
          <span class="c w21"><svg width="15" height="15" viewBox="0 0 15 15"><path d="M1 5h2l4-4v11L3 9H1z" fill="none" stroke="#111"/><circle cx="11" cy="10.500" r="4" fill="#111"/><path d="M9.500 9l3 3M12.500 9l-3 3" stroke="#ddd"/></svg></span>
          <span class="c w79 oclock"><span>10:52</span><span>22/01/2024</span></span>
          <span class="c w30"><svg width="14" height="16" viewBox="0 0 14 16"><path d="M1 12c2-2 1-4 2-7 1-4 7-4 8 0 1 3 0 5 2 7zM5.500 14c1 1.500 2 1.500 3 0" fill="none" stroke="#111" stroke-width="1.100"/></svg></span>
        </div>
      </div>
    </main>
    <aside class="rightpad"></aside>
  </div>

  <div class="redbox"></div>
  <svg class="arrow" width="130" height="250" viewBox="0 0 130 250"><path d="M10 241L120 19" stroke="#f00" stroke-width="2.400" stroke-linecap="round"/><path d="M126 7l-1 24-13-7z" fill="#f00"/></svg>
  <svg class="cursor" width="16" height="24" viewBox="0 0 16 24"><path d="M1 1v17l4-3.500 3 7 3-1.500-3-6.500h6z" fill="#fff" stroke="#555" stroke-width="1.100"/></svg>
  <svg class="tvtab" width="26" height="56" viewBox="0 0 26 56"><path d="M4 0H26V55L0 34V4z" fill="#6a6a6a"/><rect x="4" y="5" width="21" height="21" fill="#0e5a96"/><circle cx="14.500" cy="15.500" r="8" fill="#8fb2cf"/><path d="M8.500 15.500l3-2.500v1.500h6V13l3 2.500-3 2.500v-1.500h-6V18z" fill="#0e5a96"/></svg>
</div>
</body>
</html>
```

FILE: styles.css
```css
* { box-sizing: border-box; }
html, body { margin: 0; padding: 0; background: #000; }
body { width: 1630px; height: 1033px; overflow: hidden; font-family: "Noto Sans", "Open Sans", sans-serif; }
.defs { position: absolute; }
svg { display: block; flex: none; }
.vnct { font: 700 16px "Liberation Serif", serif; fill: #111; }
.vncs { font: 700 8px "Liberation Serif", serif; fill: #111; }

.screen { position: relative; width: 1630px; height: 1033px; display: flex; flex-direction: column; overflow: hidden; background: #000; }

.topbar { height: 32px; flex: none; background: #000; display: flex; align-items: center; padding: 0 0 3px 5px; color: #fff; }
.toptitle { margin-left: 5px; font-family: "Open Sans", sans-serif; font-size: 11.500px; }

.stage { flex: 1; display: flex; min-height: 0; }
.leftpad { width: 292px; background: #141414; }
.rightpad { width: 3px; background: #1a1a1a; }
.vnc { width: 1335px; display: flex; flex-direction: column; filter: blur(.45px); }

.vnctitle { height: 25px; flex: none; background: #f1f5fa; display: flex; align-items: center; padding-left: 1px; border-bottom: 1px solid #9a9a9a; }
.vnctext { margin-left: 6px; font-size: 12.500px; color: #222; font-family: "Open Sans", sans-serif; letter-spacing: -.1px; }
.wbtns { margin-left: auto; display: flex; }
.vncbtns { margin-right: 3px; }

.toolbar { height: 29px; flex: none; background: #f0f0f0; border-bottom: 2px solid #666; display: flex; align-items: center; padding: 0 0 3px 4px; }
.tb { display: flex; align-items: center; justify-content: center; height: 24px; }
.tbsep { height: 22px; position: relative; }
.tbsep::before { content: ""; position: absolute; left: 2px; top: 0; width: 1px; height: 22px; background: #a8a8a8; }
.tbon { background: #cde6f7; border: 1px solid #a9d4f0; border-radius: 2px; }
.ctrl { color: #1c3fa8; font-size: 12px; }
.alt { color: #138a20; font-size: 12px; }

.w6 { width: 6px; } .w7 { width: 7px; } .w21 { width: 21px; } .w23 { width: 23px; } .w24 { width: 24px; } .w25 { width: 25px; } .w26 { width: 26px; } .w27 { width: 27px; } .w30 { width: 30px; } .w33 { width: 33px; } .w34 { width: 34px; } .w35 { width: 35px; } .w37 { width: 37px; } .w38 { width: 38px; } .w40 { width: 40px; } .w43 { width: 43px; } .w44 { width: 44px; } .w46 { width: 46px; } .w50 { width: 50px; } .w52 { width: 52px; } .w56 { width: 56px; } .w60 { width: 60px; } .w62 { width: 62px; } .w68 { width: 68px; } .w72 { width: 72px; } .w79 { width: 79px; } .w82 { width: 82px; }

.viewport { flex: 1; min-height: 0; background: #000; padding-left: 69px; padding-right: 70px; }
.explorer { height: 100%; background: #fff; display: flex; flex-direction: column; color: #333; font-size: 13px; overflow: hidden; }

.extitle { height: 27px; flex: none; display: flex; align-items: center; background: #fff; }
.qa-mon { margin-left: -1px; }
.qasep { width: 1px; height: 16px; background: #b8b8b8; margin: 0 12px; }
.qa-blank { margin-left: 10px; }
.qa-drop { margin-left: 10px; }
.qasep2 { margin: 0 8px 0 9px; }
.extext { font-size: 14px; color: #333; }
.exbtns { margin-right: 3px; }

.tabs { height: 27px; flex: none; display: flex; align-items: stretch; font-size: 13px; color: #444; }
.tab { display: flex; align-items: center; justify-content: center; }
.file { width: 66px; background: #1a7bcb; color: #fff; }
.home { width: 67px; border: 1px solid #dfe1e3; border-bottom: 0; background: #fff; }
.tabright { margin-left: auto; display: flex; align-items: center; gap: 11px; padding-right: 4px; }
.help { width: 17px; height: 17px; border-radius: 50%; background: #0b6fd0; color: #fff; display: flex; align-items: center; justify-content: center; font-size: 13px; font-weight: 700; }

.ribbon { height: 110px; flex: none; display: flex; background: #f5f6f7; border-bottom: 3px solid #e6e6e6; border-top: 1px solid #e2e3e5; font-size: 12px; color: #444; }
.group { display: flex; flex-direction: column; height: 100%; border-right: 1px solid #dcdee0; margin: 0; position: relative; }
.g1 { width: 307px; padding-left: 9px; }
.g2 { width: 224px; padding-left: 8px; }
.g3 { width: 169px; padding-left: 4px; }
.g4 { width: 155px; padding-left: 7px; }
.g5 { width: 135px; padding-left: 7px; }
.gbody { flex: 1; display: flex; }
.glabel { height: 18px; margin: 0 10px 1px 0; line-height: 18px; text-align: center; font-size: 12px; color: #555; }
.big { display: flex; flex-direction: column; align-items: center; padding-top: 10px; text-align: center; line-height: 16px; }
.bigico { height: 36px; margin-bottom: 3px; display: flex; align-items: center; justify-content: center; }
.off { color: #8e949a; }
.smalls { display: flex; flex-direction: column; padding-top: 4px; margin-left: 6px; }
.s5 { margin-left: 0; flex: 1; }
.sm { height: 26px; display: flex; align-items: center; gap: 4px; white-space: nowrap; letter-spacing: .2px; }
.sm > svg { width: 20px; }
.caret { display: inline-block; width: 0; height: 0; border: 3px solid transparent; border-top: 4px solid #b0b4b8; border-bottom: 0; vertical-align: middle; margin-left: 2px; }
.caret.dark { border-top-color: #333; }
.vline { width: 1px; height: 64px; margin: 7px 1px 0 0; background: #dcdee0; }

.addrrow { height: 41px; flex: none; display: flex; align-items: center; position: relative; border-bottom: 1px solid #dcdcdc; padding-bottom: 5px; }
.navic { margin-left: 14px; }
.nv2 { margin-left: 19px; }
.nv3 { margin-left: 12px; }
.nv4 { margin-left: 15px; }
.addr { margin-left: 9px; width: 808px; height: 26px; border: 1px solid #d9d9d9; display: flex; align-items: center; padding-left: 3px; color: #333; font-size: 13px; }
.chev { color: #555; margin: 0 11px 0 10px; font-size: 15px; line-height: 1; }
.addrend { margin-left: auto; display: flex; align-items: center; height: 100%; }
.addrrefresh { margin-left: 5px; border-left: 1px solid #d9d9d9; width: 25px; height: 100%; display: flex; align-items: center; justify-content: center; }
.search { margin-left: 14px; width: 237px; height: 26px; border: 1px solid #d9d9d9; display: flex; align-items: center; justify-content: space-between; padding: 0 11px 0 10px; color: #666; font-size: 13px; }

.mainarea { flex: 1; min-height: 0; display: flex; overflow: hidden; }
.tree { width: 181px; flex: none; padding-top: 20px; overflow: hidden; font-size: 13px; color: #333; }
.row { height: 28px; display: flex; align-items: center; gap: 4px; padding-left: 37px; padding-right: 5px; white-space: nowrap; }
.row.top { padding-left: 27px; gap: 6px; color: #555; }
.row.gap { margin-top: 9px; }
.row.gap3 { margin-top: 10px; }
.pinned { margin-left: auto; }
.hbar { background: #cfcfcf; margin-top: -1px; height: 30px; }
.vscroll { width: 18px; flex: none; background: #f0f0f0; display: flex; flex-direction: column; position: relative; }
.thumb { height: 486px; background: #c8c8c8; margin-right: 1px; }
.sdown { margin-top: auto; margin-bottom: 0; }
.files { flex: 1; display: grid; grid-template-columns: repeat(3, 297.5px); align-content: start; padding: 10px 0 0 25px; }
.fileitem { display: flex; align-items: center; gap: 19px; color: #333; font-size: 13px; height: 55px; }

.status { height: 27px; flex: none; display: flex; align-items: center; padding: 0 0 2px 16px; background: #fff; font-size: 13px; }
.items { color: #2f4a78; border-right: 1px solid #eee; width: 56px; }
.viewbtns { margin-left: auto; display: flex; gap: 7px; padding-right: 8px; }

.remotebar { height: 47px; flex: none; background: #262626; display: flex; align-items: center; position: relative; }
.ghosts { position: absolute; left: 0; top: 0; right: 0; height: 12px; background: #181818; }
.gh { position: absolute; top: 0; height: 7px; border-radius: 0 0 6px 6px; background: #2a2a2a; }
.gh1 { left: 435px; width: 58px; }
.gh2 { left: 510px; width: 110px; }
.gh3 { left: 1005px; width: 80px; background: #1a1a3c; }
.gh4 { left: 1110px; width: 80px; background: #3a1010; }
.ghtext { position: absolute; font-size: 12px; color: #555; top: 24px; }
.gt1 { left: 844px; }
.gt2 { left: 940px; }
.gt3 { left: 1137px; }
.rb { width: 57px; height: 47px; display: flex; align-items: center; justify-content: center; position: relative; }
.rbon { background: #555; }
.rbon::after, .rbrun::after { content: ""; position: absolute; bottom: 0; height: 2px; background: #5cb85c; }
.rbon::after { left: 0; right: 0; }
.rbrun::after { left: 5px; right: 5px; }
.rtray { margin-left: auto; display: flex; align-items: center; height: 100%; padding-right: 16px; position: relative; }
.c { display: flex; flex-direction: column; align-items: center; justify-content: center; height: 100%; }
.rclock { color: #e8e8e8; font-size: 12px; line-height: 19px; }
.rnote { position: relative; }
.badge1 { position: absolute; left: 19px; top: 25px; width: 20px; height: 20px; border-radius: 50%; border: 1.500px solid #999; color: #eee; font-size: 12px; display: flex; align-items: center; justify-content: center; background: #333; }
.rline { position: absolute; right: 4px; top: 0; width: 2px; height: 100%; background: #777; }

.winbar { height: 51px; flex: none; background: #dcdcdc; display: flex; align-items: center; padding-left: 11px; border-bottom: 1px solid #333; }
.ob { width: 45.900px; height: 40px; display: flex; align-items: center; justify-content: center; position: relative; }
.ob.active { background: #f0f0f0; border-radius: 4px; width: 40px; margin: 0 3px; }
.ob.active::after { content: ""; position: absolute; bottom: 1px; left: 12px; width: 16px; height: 3px; border-radius: 2px; background: #0b6fd0; }
.ob.run::after { content: ""; position: absolute; bottom: 1px; left: 18px; width: 10px; height: 3px; border-radius: 2px; background: #777; }
.otray { margin-left: auto; display: flex; height: 100%; padding-right: 15px; font-size: 12px; color: #222; }
.lang { line-height: 17px; }
.oclock { align-items: flex-end; line-height: 17px; }

.redbox { position: absolute; left: 857px; top: 295px; width: 116px; height: 73px; border: 3px solid #f00; border-radius: 1px; }
.arrow { position: absolute; left: 793px; top: 372px; }
.cursor { position: absolute; left: 1534px; top: 477px; }
.tvtab { position: absolute; left: 1601px; top: 875px; }
```
